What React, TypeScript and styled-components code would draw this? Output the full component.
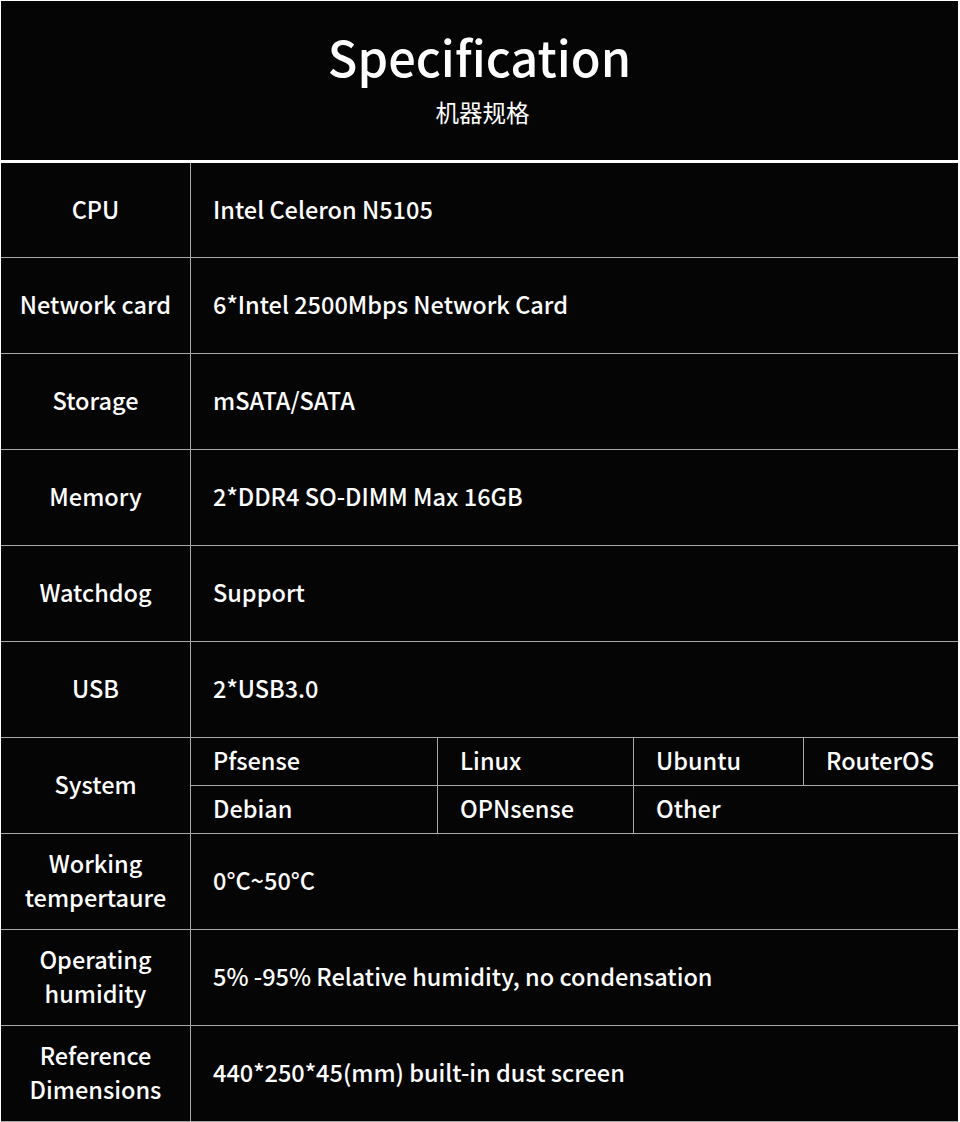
import React from "react";
import styled, { createGlobalStyle } from "styled-components";

const GlobalStyle = createGlobalStyle`
  html, body {
    margin: 0;
    padding: 0;
    background: #ffffff;
  }
  body {
    font-family: "Noto Sans CJK SC", "Noto Sans", sans-serif;
    color: #ffffff;
  }
`;

const Sheet = styled.div`
  width: 957px;
  height: 1121px;
  margin: 1px 0 0 1px;
  background: #050505;
  display: flex;
  flex-direction: column;
  overflow: hidden;
`;

const Header = styled.header`
  box-sizing: border-box;
  height: 162px;
  border-bottom: 3px solid #ffffff;
  display: flex;
  flex-direction: column;
  align-items: center;
  padding-top: 25px;
`;

const Title = styled.h1`
  margin: 0;
  font-size: 48.7px;
  font-weight: 500;
  line-height: 60px;
`;

const Subtitle = styled.div`
  font-size: 23.5px;
  font-weight: 400;
  line-height: 30px;
  margin-top: 11px;
  padding-left: 6px;
`;

const Row = styled.div<{ $first?: boolean }>`
  display: grid;
  grid-template-columns: 190px 1fr;
  height: ${(p) => (p.$first ? "95px" : "96px")};
  box-sizing: border-box;
  border-bottom: 1px solid #a8a8a8;
`;

const Label = styled.div`
  display: flex;
  align-items: center;
  justify-content: center;
  text-align: center;
  border-right: 1px solid #a8a8a8;
  font-size: 23.5px;
  font-weight: 500;
  line-height: 34px;
  padding-bottom: 3px;
`;

const Value = styled.div`
  display: flex;
  align-items: center;
  padding: 0 0 3px 22px;
  font-size: 23.5px;
  font-weight: 500;
`;

const OsGrid = styled.div`
  display: grid;
  grid-template-columns: 247px 196px 170px 1fr;
  grid-template-rows: 1fr 1fr;
`;

const OsCell = styled.div<{ $right?: boolean; $top?: boolean; $span?: number }>`
  display: flex;
  align-items: center;
  padding: 0 0 3px 22px;
  font-size: 23.5px;
  font-weight: 500;
  border-right: ${(p) => (p.$right ? "1px solid #a8a8a8" : "none")};
  border-bottom: ${(p) => (p.$top ? "1px solid #a8a8a8" : "none")};
  grid-column: ${(p) => (p.$span ? `span ${p.$span}` : "auto")};
`;

const specs: { label: React.ReactNode; value: string }[] = [
  { label: "CPU", value: "Intel Celeron N5105" },
  { label: "Network card", value: "6*Intel 2500Mbps Network Card" },
  { label: "Storage", value: "mSATA/SATA" },
  { label: "Memory", value: "2*DDR4 SO-DIMM Max 16GB" },
  { label: "Watchdog", value: "Support" },
  { label: "USB", value: "2*USB3.0" },
];

const tail: { label: React.ReactNode; value: string }[] = [
  { label: <>Working<br />tempertaure</>, value: "0°C~50°C" },
  { label: <>Operating<br />humidity</>, value: "5% -95% Relative humidity, no condensation" },
  { label: <>Reference<br />Dimensions</>, value: "440*250*45(mm) built-in dust screen" },
];

export default function App() {
  return (
    <>
      <GlobalStyle />
      <Sheet>
        <Header>
          <Title>Specification</Title>
          <Subtitle>机器规格</Subtitle>
        </Header>
        {specs.map((s, i) => (
          <Row key={i} $first={i === 0}>
            <Label>{s.label}</Label>
            <Value>{s.value}</Value>
          </Row>
        ))}
        <Row>
          <Label>System</Label>
          <OsGrid>
            <OsCell $right $top>Pfsense</OsCell>
            <OsCell $right $top>Linux</OsCell>
            <OsCell $right $top>Ubuntu</OsCell>
            <OsCell $top>RouterOS</OsCell>
            <OsCell $right>Debian</OsCell>
            <OsCell $right>OPNsense</OsCell>
            <OsCell $span={2}>Other</OsCell>
          </OsGrid>
        </Row>
        {tail.map((s, i) => (
          <Row key={i}>
            <Label>{s.label}</Label>
            <Value>{s.value}</Value>
          </Row>
        ))}
      </Sheet>
    </>
  );
}
